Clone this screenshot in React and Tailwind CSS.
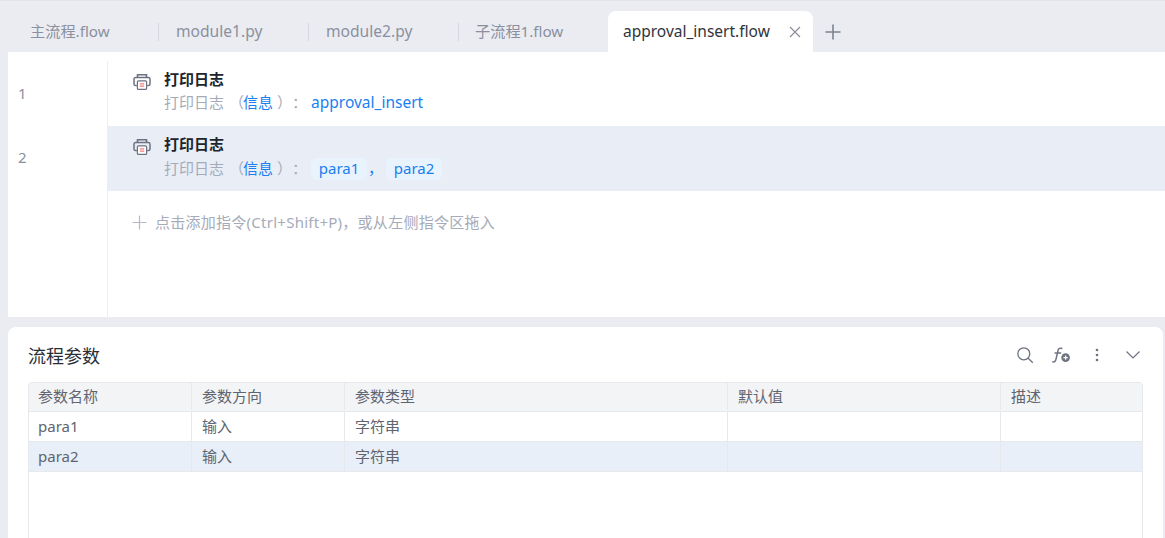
const FONT = "font-['Noto_Sans','Noto_Sans_CJK_SC',sans-serif]";

function Printer() {
  return (
    <svg width="20" height="20" viewBox="0 0 20 20" fill="none" className="shrink-0">
      <path d="M5.5 5.5V2.8h9v2.7" stroke="#6b7280" strokeWidth="1.6" />
      <path d="M4.8 13.5H3.6A1.6 1.6 0 0 1 2 11.9V7.2a1.6 1.6 0 0 1 1.6-1.6h12.8A1.6 1.6 0 0 1 18 7.2v4.7a1.6 1.6 0 0 1-1.6 1.6h-1.2" stroke="#6b7280" strokeWidth="1.5" />
      <rect x="5.4" y="8.8" width="9.2" height="8.6" rx="1" fill="#fff" stroke="#6b7280" strokeWidth="1.2" />
      <path d="M7.8 11.8h4.4M7.8 14.2h4.4" stroke="#f47c7c" strokeWidth="1.2" />
    </svg>
  );
}

function Tab({ label, first, cjk }) {
  return (
    <div className="flex h-[41px] w-[150px] items-center">
      <div className={`h-[18px] w-px ${first ? "bg-transparent" : "bg-[#d5d8de]"}`} />
      <span className={`${cjk ? "ml-[16px] text-[15.2px]" : "ml-[17px] text-[15.6px]"} text-[#8a90a0]`}>{label}</span>
    </div>
  );
}

function Row({ selected, num, children }) {
  return (
    <div className="flex h-[65px]">
      <div className={`flex w-[99px] shrink-0 items-center pl-[10px] text-[15px] text-[#8b919e] ${selected ? "pb-[2px]" : ""}`}>{num}</div>
      <div className={`flex flex-1 border-l border-[#eceef1] pl-[24px] ${selected ? "bg-[#e9eef6]" : "bg-white"}`}>
        <div className="mt-[11px] h-fit"><Printer /></div>
        <div className="ml-[12px] flex flex-col pt-[6px]">
          <div className="h-[24px] text-[15px] leading-[24px] font-bold text-[#20242c]">打印日志</div>
          <div className={`flex h-[23px] items-center text-[15px] text-[#a5abb9] ${selected ? "pt-[2px]" : ""}`}>{children}</div>
        </div>
      </div>
    </div>
  );
}

function Cell({ w, children, grow, last, first }) {
  return (
    <div className={`flex items-center ${first ? "pl-[9px]" : "pl-[10px]"} ${grow ? "flex-1" : ""} ${last ? "" : "border-r border-[#e6e8ec]"}`} style={w ? { width: w } : undefined}>
      {children}
    </div>
  );
}

function TableRow({ cells, className }) {
  const widths = [163, 153, 383, 273];
  return (
    <div className={`flex border-b border-[#e6e8ec] text-[15px] ${className}`}>
      {cells.map((c, i) => (
        <Cell key={i} w={widths[i]} first={i === 0} grow={i === 4} last={i === 4}>{c}</Cell>
      ))}
    </div>
  );
}

export default function App() {
  const para = "rounded-[6px] bg-[#e9f3fe] w-[56px] justify-center h-[22px] flex items-center text-[#1a7ff0] text-[15px]";
  return (
    <div className={`${FONT} h-[538px] w-[1165px] overflow-hidden bg-[#ebecf1]`}>
      <div className="h-[1px] bg-[#e3e4e9]" />
      <div className="flex h-[51px] items-end pl-[13px]">
        <div className="flex items-center">
          <div className="w-[145px]"><Tab label="主流程.flow" first cjk /></div>
          <Tab label="module1.py" />
          <Tab label="module2.py" />
          <div className="w-[150px]"><Tab label="子流程1.flow" cjk /></div>
        </div>
        <div className="flex h-[41px] w-[205px] items-center justify-between rounded-t-[8px] bg-white pl-[15px] pr-[12px] text-[15.5px] text-[#30343c]">
          <span>approval_insert.flow</span>
          <svg width="12" height="12" viewBox="0 0 12 12" fill="none"><path d="M1 1l10 10M11 1L1 11" stroke="#8a8f99" strokeWidth="1.2" /></svg>
        </div>
        <div className="ml-[12px] flex h-[41px] items-center">
          <svg width="16" height="16" viewBox="0 0 16 16" fill="none"><path d="M8 0.5v15M0.5 8h15" stroke="#7d8391" strokeWidth="1.6" /></svg>
        </div>
      </div>

      <div className="ml-[8px] h-[265px] bg-white pt-[9px]">
        <Row num="1">
          <span>打印日志</span>
          <span className="ml-[5px]">（</span>
          <span className="-ml-px text-[#1a7ff0]">信息</span>
          <span className="ml-[4px]">）</span>
          <span>：</span>
          <span className="ml-[4px] text-[15.5px] text-[#1a7ff0]">approval_insert</span>
        </Row>
        <Row selected num="2">
          <span>打印日志</span>
          <span className="ml-[5px]">（</span>
          <span className="-ml-px text-[#1a7ff0]">信息</span>
          <span className="ml-[4px]">）</span>
          <span>：</span>
          <span className={`ml-[4px] ${para}`}>para1</span>
          <span className="w-[19px] pl-[1px] text-[#1a7ff0]">，</span>
          <span className={para}>para2</span>
        </Row>
        <div className="flex h-[126px]">
          <div className="w-[99px] shrink-0" />
          <div className="flex flex-1 border-l border-[#eceef1] pl-[24px] pt-[21px] text-[#a5abb9]">
            <div className="flex h-[20px] items-center">
              <svg width="15" height="15" viewBox="0 0 15 15" fill="none"><path d="M7.5 0.5v14M0.5 7.5h14" stroke="#b5bac6" strokeWidth="1.2" /></svg>
              <span className="ml-[8px] text-[15px] tracking-[0.26px]">点击添加指令(Ctrl+Shift+P)，或从左侧指令区拖入</span>
            </div>
          </div>
        </div>
      </div>

      <div className="mt-[10px] ml-[8px] mr-[2px] h-[211px] rounded-t-[8px] bg-white px-[20px]">
        <div className="flex h-[55px] items-center justify-between">
          <span className="pt-[4px] text-[18px] font-normal text-[#2a2e36]">流程参数</span>
          <div className="flex items-center pr-[2px]">
            <svg width="18" height="18" viewBox="0 0 18 18" fill="none"><circle cx="7.8" cy="7.8" r="6" stroke="#6d7380" strokeWidth="1.3" /><path d="M12.2 12.2l4.6 4.6" stroke="#6d7380" strokeWidth="1.3" /></svg>
            <svg className="ml-[17px]" width="20" height="18" viewBox="0 0 20 18" fill="none">
              <path d="M1.2 15.6c2.4 1 3.4-.4 4-3.2l1.7-7.6c.5-2.3 2.2-3.2 4.5-2.3M3.6 7h6.6" stroke="#6d7380" strokeWidth="1.5" />
              <circle cx="14.6" cy="11.6" r="4.3" fill="#6d7380" />
              <path d="M14.6 9.4v4.4M12.4 11.6h4.4" stroke="#fff" strokeWidth="1.2" />
            </svg>
            <svg className="ml-[24px]" width="4" height="14" viewBox="0 0 4 14" fill="#6d7380"><circle cx="2" cy="2" r="1.3" /><circle cx="2" cy="7" r="1.3" /><circle cx="2" cy="12" r="1.3" /></svg>
            <svg className="ml-[26px]" width="16" height="10" viewBox="0 0 16 10" fill="none"><path d="M1.5 1.5L8 8l6.5-6.5" stroke="#6d7380" strokeWidth="1.2" /></svg>
          </div>
        </div>
        <div className="h-[160px] rounded-t-[4px] border border-b-0 border-[#e6e8ec] text-[#5f6570]">
          <TableRow className="h-[29px] bg-[#f3f4f6] pb-[1px]" cells={["参数名称", "参数方向", "参数类型", "默认值", "描述"]} />
          <TableRow className="h-[30px] bg-white" cells={["para1", "输入", "字符串", "", ""]} />
          <TableRow className="h-[30px] bg-[#e8eff8]" cells={["para2", "输入", "字符串", "", ""]} />
        </div>
      </div>
    </div>
  );
}
